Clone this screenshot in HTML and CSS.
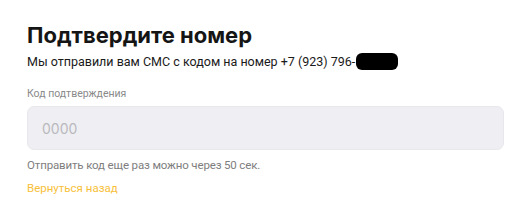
FILE: index.html
```html
<!DOCTYPE html>
<html lang="ru">
<head>
  <meta charset="UTF-8" />
  <meta name="viewport" content="width=device-width, initial-scale=1.0" />
  <title>Подтвердите номер</title>
  <link rel="stylesheet" href="styles.css">
</head>
<body>
  <div class="confirm">
    <h1>Подтвердите номер</h1>
    <p class="subtitle">Мы отправили вам СМС с кодом на номер +7 (923) 796-<span class="hidden-part"></span></p>

    <label class="field-label" for="code">Код подтверждения</label>
    <input id="code" class="code-input" type="text" placeholder="0000" />

    <p class="hint">Отправить код еще раз можно через 50 сек.</p>
    <a class="back-link" href="#">Вернуться назад</a>
  </div>
</body>
</html>
```

FILE: styles.css
```css
/* Page */
body {
  margin: 0;
  padding: 0;
  background: #fff;
  font-family: Roboto, "Noto Sans", Arial, sans-serif;
  color: #111;
}
.confirm {
  padding: 22px 8px 0 27px;
  display: flex;
  flex-direction: column;
  align-items: flex-start;
}
h1 {
  margin: 0;
  font-family: Inter, "Noto Sans", Arial, sans-serif;
  font-size: 22px;
  font-weight: 700;
  line-height: 27px;
  color: #151515;
}
.subtitle {
  margin: 4px 0 0;
  font-size: 12.5px;
  line-height: 18px;
  color: #1a1a1a;
}
.hidden-part {
  display: inline-block;
  width: 42px;
  height: 17px;
  margin-left: 1px;
  vertical-align: -4px;
  background: #000;
  border-radius: 6px;
}

/* Code field */
.field-label {
  margin-top: 16px;
  font-size: 10.5px;
  line-height: 14px;
  color: #8a8a8a;
}
.code-input {
  box-sizing: border-box;
  width: 477px;
  height: 44px;
  margin-top: 5px;
  padding: 0 14px;
  border: 1px solid #e8e8ec;
  border-radius: 7px;
  background: #efeff3;
  font-family: Inter, "Noto Sans", Arial, sans-serif;
  font-size: 14px;
  color: #333;
  outline: none;
}
.code-input::placeholder {
  color: #b9b9bd;
}
.hint {
  margin: 8px 0 0;
  font-size: 11.5px;
  line-height: 14px;
  letter-spacing: -0.15px;
  color: #7e7e7e;
}
.back-link {
  margin-top: 9px;
  font-size: 11.5px;
  line-height: 14px;
  color: #f8bf3a;
  text-decoration: none;
}
```
